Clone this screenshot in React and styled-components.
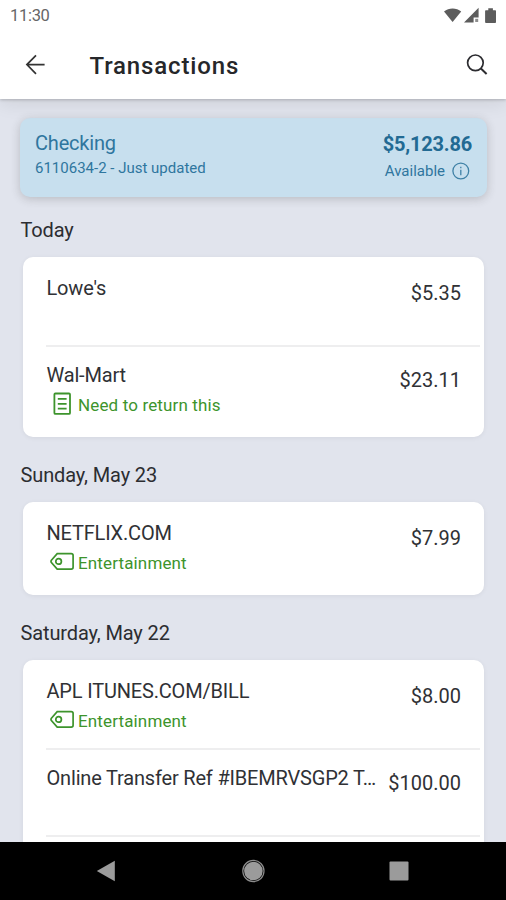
import React from "react";
import styled, { createGlobalStyle } from "styled-components";

const account = {
  name: "Checking",
  detail: "6110634-2 - Just updated",
  balance: "$5,123.86",
};

const days = [
  {
    title: "Today",
    items: [
      { name: "Lowe's", amount: "$5.35" },
      { name: "Wal-Mart", amount: "$23.11", note: "Need to return this" },
    ],
  },
  {
    title: "Sunday, May 23",
    items: [{ name: "NETFLIX.COM", amount: "$7.99", tag: "Entertainment" }],
  },
  {
    title: "Saturday, May 22",
    items: [
      { name: "APL ITUNES.COM/BILL", amount: "$8.00", tag: "Entertainment" },
      {
        name: "Online Transfer Ref #IBEMRVSGP2 T…",
        amount: "$100.00",
      },
      { name: "", amount: "" },
    ],
  },
];

function StatusIcons() {
  return (
    <svg width="56" height="18" viewBox="0 0 56 18" fill="#5c5c5c">
      <path d="M0 4.4C4.8 0.4 12.4 0.4 17.2 4.4L8.6 15Z" />
      <path d="M34.6 0.8v9.6h-5v5H20Z" />
      <path d="M31.2 11.8h3v3.2h-3z" opacity="0.7" />
      <path d="M41.9 3.2h2.4V1.2h4.6v2h2.4q.7 0 .7.8v11q0 .9-.8.9h-9.2q-.9 0-.9-.9V4q0-.8.8-.8Z" />
    </svg>
  );
}

function BackIcon() {
  return (
    <svg width="22" height="22" viewBox="0 0 22 22" fill="none" stroke="#333" strokeWidth="1.7">
      <path d="M19.6 10.6H2M11 1.4 1.9 10.6l9.1 9.2" />
    </svg>
  );
}

function SearchIcon() {
  return (
    <svg width="22" height="22" viewBox="0 0 22 22" fill="none" stroke="#2c2c30" strokeWidth="1.7">
      <circle cx="9.4" cy="8.8" r="7.8" />
      <path d="m14.9 14.5 5.7 5.5" strokeWidth="2" />
    </svg>
  );
}

function InfoIcon() {
  return (
    <svg width="18" height="18" viewBox="0 0 18 18" fill="none" stroke="#3f81a6" strokeWidth="1.3">
      <circle cx="8.8" cy="9" r="7.9" />
      <path d="M8.8 7.8v5.4M8.8 4.8v1.5" />
    </svg>
  );
}

function NoteIcon() {
  return (
    <svg width="24" height="24" viewBox="0 0 24 24" fill="none" stroke="#3d942c" strokeWidth="1.8">
      <rect x="4.4" y="1.5" width="15.6" height="20.4" rx="1" />
      <path d="M7.8 6.9h8.8M7.8 11.8h8.8M7.8 16.7h8.8" />
    </svg>
  );
}

function TagIcon() {
  return (
    <svg width="24" height="24" viewBox="0 0 24 24" fill="none" stroke="#3d942c" strokeWidth="1.7">
      <path d="M7.2 3.7h14q1.9 0 1.9 1.9v11.6q0 1.9-1.9 1.9h-14L1.4 12.6q-.8-1.2 0-2.4Z" />
      <circle cx="8.6" cy="11.4" r="2.8" />
    </svg>
  );
}

function Transaction({ item }) {
  const label = item.note || item.tag;
  return (
    <Row>
      <RowMain>
        <Name>{item.name}</Name>
        {label && (
          <Label>
            <LabelIcon>{item.note ? <NoteIcon /> : <TagIcon />}</LabelIcon>
            <span>{label}</span>
          </Label>
        )}
      </RowMain>
      <Amount>{item.amount}</Amount>
    </Row>
  );
}

function App() {
  return (
    <Screen>
      <GlobalStyle />
      <TopBar>
        <StatusBar>
          <Clock>11:30</Clock>
          <StatusIcons />
        </StatusBar>
        <Toolbar>
          <BackIcon />
          <Title>Transactions</Title>
          <SearchIcon />
        </Toolbar>
      </TopBar>
      <Content>
        <AccountCard>
          <div>
            <AccountName>{account.name}</AccountName>
            <AccountDetail>{account.detail}</AccountDetail>
          </div>
          <AccountRight>
            <Balance>{account.balance}</Balance>
            <Available>
              Available
              <InfoIcon />
            </Available>
          </AccountRight>
        </AccountCard>
        {days.map((day) => (
          <section key={day.title}>
            <DayTitle>{day.title}</DayTitle>
            <Card>
              {day.items.map((item, i) => (
                <Transaction key={i} item={item} />
              ))}
            </Card>
          </section>
        ))}
      </Content>
      <NavBar>
        <svg width="20" height="22" viewBox="0 0 20 22" fill="#9b9b9b">
          <path d="M18.8.8v20.5L.8 11Z" />
        </svg>
        <svg width="24" height="24" viewBox="0 0 24 24">
          <circle cx="12.4" cy="12" r="10.6" fill="none" stroke="#8c8c8c" strokeWidth="1.2" />
          <circle cx="12.4" cy="12" r="9.3" fill="#9b9b9b" />
        </svg>
        <svg width="20" height="20" viewBox="0 0 20 20" fill="#9b9b9b">
          <rect x="0.5" y="0.5" width="19" height="19" rx="1" />
        </svg>
      </NavBar>
    </Screen>
  );
}

export default App;

const GlobalStyle = createGlobalStyle`
  * {
    box-sizing: border-box;
  }
  body {
    margin: 0;
    font-family: Roboto, "Liberation Sans", sans-serif;
  }
  svg {
    display: block;
    flex-shrink: 0;
  }
`;

const Screen = styled.div`
  display: flex;
  flex-direction: column;
  width: 506px;
  height: 900px;
  overflow: hidden;
  background: #e1e4ed;
`;

const TopBar = styled.header`
  flex-shrink: 0;
  height: 99px;
  background: #fff;
  box-shadow: 0 1px 3px rgba(0, 0, 0, 0.2), 0 4px 18px rgba(0, 0, 0, 0.09);
  z-index: 1;
`;

const StatusBar = styled.div`
  display: flex;
  justify-content: space-between;
  align-items: center;
  height: 31px;
  padding: 0 6px 0 10px;
`;

const Clock = styled.span`
  font-size: 16.5px;
  letter-spacing: -0.3px;
  color: #666;
`;

const Toolbar = styled.div`
  display: flex;
  align-items: center;
  height: 68px;
  padding: 0 18px 0 25px;
`;

const Title = styled.h1`
  flex: 1;
  margin: 2px 0 0 42.5px;
  font-size: 24px;
  font-weight: 500;
  line-height: 30px;
  letter-spacing: 0.85px;
  color: #26272a;
`;

const Content = styled.main`
  flex: 1;
  min-height: 0;
  padding: 19px 22px 0 20px;
  overflow: hidden;
`;

const AccountCard = styled.div`
  display: flex;
  justify-content: space-between;
  width: 467px;
  height: 79px;
  padding: 13px 15px 0 15px;
  border-radius: 10px;
  background: #c7dfee;
  box-shadow: 0 2px 10px rgba(60, 60, 60, 0.24);
  color: #2f769e;
`;

const AccountName = styled.div`
  font-size: 20px;
  line-height: 24px;
  letter-spacing: -0.2px;
`;

const AccountDetail = styled.div`
  margin-top: 3px;
  font-size: 15px;
  line-height: 20px;
`;

const AccountRight = styled.div`
  display: flex;
  flex-direction: column;
  align-items: flex-end;
`;

const Balance = styled.div`
  font-size: 20px;
  font-weight: 700;
  line-height: 26px;
  letter-spacing: -0.2px;
  color: #226a93;
`;

const Available = styled.div`
  display: flex;
  align-items: center;
  gap: 7px;
  margin: 4px 2px 0 0;
  font-size: 15px;
  line-height: 20px;
`;

const DayTitle = styled.h2`
  margin: 0;
  padding: 20px 0 0 0.5px;
  height: 60px;
  font-size: 20px;
  font-weight: 400;
  line-height: 26px;
  letter-spacing: -0.13px;
  color: #2c2d31;
`;

const Card = styled.div`
  width: 461px;
  margin-left: 3px;
  margin-bottom: 5px;
  padding: 3px 4px 3px 23px;
  border-radius: 10px;
  background: #fff;
  box-shadow: 0 1px 5px rgba(0, 0, 0, 0.06);
`;

const Row = styled.div`
  display: flex;
  justify-content: space-between;
  height: 87px;
  padding: 16px 19px 0 0;
  border-bottom: 2px solid #eeeeef;

  &:last-child {
    border-bottom: none;
  }
`;

const RowMain = styled.div`
  flex: 1;
  min-width: 0;
`;

const Name = styled.div`
  padding-left: 0.5px;
  font-size: 20px;
  line-height: 24px;
  letter-spacing: -0.18px;
  white-space: nowrap;
  color: #303135;
`;

const Label = styled.div`
  display: flex;
  align-items: center;
  gap: 4px;
  height: 24px;
  margin: 6px 0 0 4px;
  font-size: 17px;
  line-height: 24px;
  letter-spacing: 0.14px;
  color: #3d942c;
`;

const LabelIcon = styled.span`
  margin-bottom: 2px;
`;

const Amount = styled.div`
  padding-top: 5px;
  font-size: 20px;
  line-height: 24px;
  color: #303135;
`;

const NavBar = styled.nav`
  display: flex;
  flex-shrink: 0;
  align-items: center;
  justify-content: space-between;
  height: 58px;
  padding: 0 97px 0 96px;
  background: #000;
`;
